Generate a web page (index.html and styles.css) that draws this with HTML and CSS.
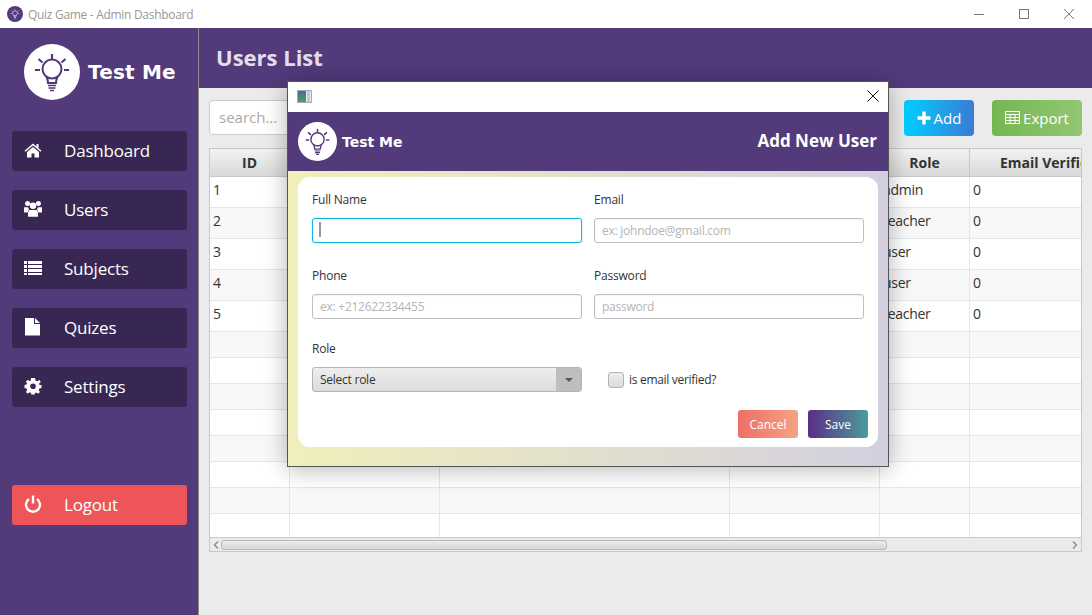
FILE: index.html
```html
<!DOCTYPE html>
<html lang="en">
  <head>
    <meta charset="UTF-8" />
    <title>Quiz Game - Admin Dashboard</title>
    <link rel="stylesheet" href="styles.css">
  </head>
  <body>
    <svg class="defs" width="0" height="0">
      <symbol id="bulb" viewBox="0 0 56 56">
        <g fill="none" stroke="currentColor" stroke-width="2" stroke-linecap="butt">
          <circle cx="28" cy="25" r="9.5"/>
          <path d="M22.500 33 C24 36 24 37 24 39 H32 C32 37 32 36 33.500 33"/>
          <path d="M24 41.500 H32 M24.500 44 H31.500 M26 46.500 H30" stroke-width="1.500"/>
          <path d="M28 10 V15 M14.500 15 L18.500 18.500 M41.500 15 L37.500 18.500 M11 26 H16 M40 26 H45" stroke-width="2.200"/>
        </g>
      </symbol>
    </svg>

    <header class="titlebar">
      <span class="app-icon"><svg width="14" height="14"><use href="#bulb"/></svg></span>
      <span class="app-title">Quiz Game - Admin Dashboard</span>
      <div class="win-controls">
        <svg width="12" height="12" viewBox="0 0 12 12"><path d="M1 6.500 H11" stroke="#777" fill="none"/></svg>
        <svg width="12" height="12" viewBox="0 0 12 12"><rect x="1.500" y="1.500" width="9" height="9" stroke="#777" fill="none"/></svg>
        <svg width="12" height="12" viewBox="0 0 12 12"><path d="M1 1 L11 11 M11 1 L1 11" stroke="#777" fill="none"/></svg>
      </div>
    </header>

    <div class="app">
      <aside class="sidebar">
        <div class="brand">
          <span class="logo logo-big"><svg width="56" height="56"><use href="#bulb"/></svg></span>
          <span class="brand-name">Test Me</span>
        </div>
        <nav class="nav">
          <a class="nav-item">
            <svg class="nav-icon" viewBox="0 0 18 18"><path d="M9 2.500 L12.500 5.500 V3 H14.500 V7.200 L17.500 9.800 L16.600 10.800 L9 4.400 L1.400 10.800 L0.500 9.800 Z M3 11 L9 5.900 L15 11 V16.500 H10.500 V12.500 H7.500 V16.500 H3 Z" fill="#fff"/></svg>
            Dashboard
          </a>
          <a class="nav-item">
            <svg class="nav-icon" viewBox="0 0 20 20"><g fill="#fff"><circle cx="4" cy="4" r="2.800"/><circle cx="16" cy="4" r="2.800"/><circle cx="10" cy="6.500" r="3.600"/><path d="M0 8 H4.500 L5.500 10.500 L4 14 H0 Z M20 8 H15.500 L14.500 10.500 L16 14 H20 Z M6 11 H14 L15.500 13.500 V18.500 H4.500 V13.500 Z"/></g></svg>
            Users
          </a>
          <a class="nav-item">
            <svg class="nav-icon" viewBox="0 0 18 18"><path d="M0 2 H3 V5 H0 Z M4 2 H18 V5 H4 Z M0 6 H3 V9 H0 Z M4 6 H18 V9 H4 Z M0 10 H3 V13 H0 Z M4 10 H18 V13 H4 Z M0 14 H3 V16 H0 Z M4 14 H18 V16 H4 Z" fill="#fff"/></svg>
            Subjects
          </a>
          <a class="nav-item">
            <svg class="nav-icon" viewBox="0 0 18 18"><path d="M1 0 H10 V6 H16 V17.500 H1 Z M11 0 L16 5 H11 Z" fill="#fff"/></svg>
            Quizes
          </a>
          <a class="nav-item">
            <svg class="nav-icon" viewBox="0 0 18 18"><path fill-rule="evenodd" d="M7 1 H11 L11.500 3.400 L13.400 4.200 L15.500 2.900 L16.800 5 L15 6.600 L15.500 8 H17.500 V11 L15.400 11.500 L14.700 13.200 L16 15 L14 16.800 L12.300 15.400 L11 16 L10.700 17.500 H7.300 L7 15.900 L5.500 15.300 L3.900 16.700 L1.900 14.900 L3.200 13.200 L2.600 11.500 L0.500 11 V8 L2.600 7.600 L3.200 6.300 L1.800 4.800 L3.700 2.900 L5.500 4.100 L6.800 3.500 Z M9 6.500 A2.800 2.800 0 1 0 9 12.100 A2.800 2.800 0 1 0 9 6.500 Z" fill="#fff"/></svg>
            Settings
          </a>
          <a class="nav-item logout">
            <svg class="nav-icon" viewBox="0 0 18 18"><path d="M5 4 A7 7 0 1 0 13 4 M9 0.500 V8.500" fill="none" stroke="#fff" stroke-width="2.400"/></svg>
            Logout
          </a>
        </nav>
      </aside>

      <main class="main">
        <div class="page-head"><h1>Users List</h1></div>
        <div class="content">
          <div class="toolbar">
            <input class="search" placeholder="search...">
            <button class="tool-btn add">
              <svg width="14" height="14" viewBox="0 0 14 14"><path d="M5.300 0.500 H8.700 V5.300 H13.500 V8.700 H8.700 V13.500 H5.300 V8.700 H0.500 V5.300 H5.300 Z" fill="#fff"/></svg>
              Add
            </button>
            <button class="tool-btn export">
              <svg width="15" height="13" viewBox="0 0 15 13"><path d="M0.500 0.500 H14.500 V12.500 H0.500 Z M0.500 3.500 H14.500 M0.500 6.500 H14.500 M0.500 9.500 H14.500 M5 3.500 V12.500 M10 3.500 V12.500" fill="none" stroke="#fff"/></svg>
              Export
            </button>
          </div>

          <div class="table-box">
            <div class="table-clip">
              <table class="users">
                <colgroup>
                  <col class="c-id"><col class="c-name"><col class="c-email"><col class="c-phone"><col class="c-role"><col class="c-verified">
                </colgroup>
                <thead>
                  <tr><th>ID</th><th>Full Name</th><th>Email</th><th>Phone</th><th>Role</th><th>Email Verified</th></tr>
                </thead>
                <tbody>
                  <tr class="filled"><td>1</td><td></td><td></td><td></td><td>admin</td><td>0</td></tr>
                  <tr class="filled"><td>2</td><td></td><td></td><td></td><td>teacher</td><td>0</td></tr>
                  <tr class="filled"><td>3</td><td></td><td></td><td></td><td>user</td><td>0</td></tr>
                  <tr class="filled"><td>4</td><td></td><td></td><td></td><td>user</td><td>0</td></tr>
                  <tr class="filled"><td>5</td><td></td><td></td><td></td><td>teacher</td><td>0</td></tr>
                  <tr><td></td><td></td><td></td><td></td><td></td><td></td></tr>
                  <tr><td></td><td></td><td></td><td></td><td></td><td></td></tr>
                  <tr><td></td><td></td><td></td><td></td><td></td><td></td></tr>
                  <tr><td></td><td></td><td></td><td></td><td></td><td></td></tr>
                  <tr><td></td><td></td><td></td><td></td><td></td><td></td></tr>
                  <tr><td></td><td></td><td></td><td></td><td></td><td></td></tr>
                  <tr><td></td><td></td><td></td><td></td><td></td><td></td></tr>
                  <tr><td></td><td></td><td></td><td></td><td></td><td></td></tr>
                </tbody>
              </table>
            </div>
            <div class="hscroll">
              <svg width="6" height="8" viewBox="0 0 6 8"><path d="M5 0.500 L1.500 4 L5 7.500" fill="none" stroke="#888" stroke-width="1.300"/></svg>
              <div class="thumb-track"><div class="thumb"></div></div>
              <svg width="6" height="8" viewBox="0 0 6 8"><path d="M1 0.500 L4.500 4 L1 7.500" fill="none" stroke="#888" stroke-width="1.300"/></svg>
            </div>
          </div>
        </div>
      </main>
    </div>

    <section class="dialog">
      <div class="dialog-title">
        <span class="java-icon"><i></i><i></i></span>
        <svg width="12" height="12" viewBox="0 0 12 12"><path d="M0.500 0.500 L11.500 11.500 M11.500 0.500 L0.500 11.500" stroke="#111" fill="none"/></svg>
      </div>
      <div class="dialog-head">
        <div class="brand-small">
          <span class="logo logo-small"><svg width="39" height="39"><use href="#bulb"/></svg></span>
          <span class="brand-name small">Test Me</span>
        </div>
        <h2>Add New User</h2>
      </div>
      <div class="dialog-body">
        <form class="card">
          <div class="form-grid">
            <div class="field">
              <span class="field-label">Full Name</span>
              <input class="text-in focused">
              <span class="caret"></span>
            </div>
            <div class="field">
              <span class="field-label">Email</span>
              <input class="text-in" placeholder="ex: johndoe@gmail.com">
            </div>
            <div class="field">
              <span class="field-label">Phone</span>
              <input class="text-in" placeholder="ex: +212622334455">
            </div>
            <div class="field">
              <span class="field-label">Password</span>
              <input class="text-in" placeholder="password">
            </div>
            <div class="field">
              <span class="field-label">Role</span>
              <div class="select"><span>Select role</span><b><i></i></b></div>
            </div>
            <div class="verified"><span class="check"></span><span>is email verified?</span></div>
          </div>
          <div class="actions">
            <button type="button" class="act cancel">Cancel</button>
            <button type="button" class="act save">Save</button>
          </div>
        </form>
      </div>
    </section>
  </body>
</html>
```

FILE: styles.css
```css
* {
  box-sizing: border-box;
}

html,
body {
  margin: 0;
  height: 615px;
  overflow: hidden;
}

body {
  font-family: "Open Sans", "Liberation Sans", sans-serif;
  color: #333;
  background: #ebebeb;
}

.defs {
  position: absolute;
}

/* window chrome */
.titlebar {
  height: 28px;
  background: #fff;
  display: flex;
  align-items: center;
  padding-left: 7px;
}

.app-icon {
  width: 16px;
  height: 16px;
  border-radius: 50%;
  background: #533a7b;
  color: #fff;
  display: flex;
  align-items: center;
  justify-content: center;
}

.app-title {
  margin-left: 5px;
  font-size: 12px;
  letter-spacing: -0.3px;
  color: #999;
}

.win-controls {
  margin-left: auto;
  display: flex;
  gap: 33px;
  padding-right: 17px;
}

.app {
  display: flex;
  height: 587px;
}

/* sidebar */
.sidebar {
  width: 199px;
  flex: none;
  background: #533a7b;
  border-right: 1px solid #8a8a8a;
  padding: 16px 11px 0 12px;
}

.brand {
  display: flex;
  align-items: center;
  gap: 8px;
  padding-left: 12px;
}

.logo {
  border-radius: 50%;
  background: #fff;
  color: #533a7b;
  display: block;
  flex: none;
}

.logo svg {
  display: block;
}

.logo-big {
  width: 56px;
  height: 56px;
}

.logo-small {
  width: 39px;
  height: 39px;
}

.brand-name {
  font-family: "DejaVu Sans", sans-serif;
  font-weight: bold;
  font-size: 20px;
  letter-spacing: 0.2px;
  color: #fff;
}

.brand-name.small {
  font-size: 14px;
  letter-spacing: 0;
}

.nav {
  margin-top: 31px;
  display: flex;
  flex-direction: column;
  gap: 19px;
}

.nav-item {
  height: 40px;
  border-radius: 3px;
  background: #372752;
  color: #fff;
  font-size: 17px;
  letter-spacing: -0.2px;
  display: flex;
  align-items: center;
  padding: 0 0 2px 12px;
}

.nav-icon {
  width: 18px;
  height: 18px;
  margin-right: 22px;
  flex: none;
}

.logout {
  margin-top: 59px;
  background: #ee5558;
}

/* main */
.main {
  flex: 1;
  min-width: 0;
}

.page-head {
  height: 60px;
  background: #533a7b;
  display: flex;
  align-items: center;
  padding: 0 0 2px 17px;
}

.page-head h1 {
  margin: 0;
  font-size: 22px;
  font-weight: bold;
  color: #e3e0ec;
}

.content {
  padding: 12px 10px 0;
}

.toolbar {
  display: flex;
  height: 36px;
  gap: 18px;
}

.search {
  width: 200px;
  height: 35px;
  margin-right: auto;
  border: 1px solid #ccc;
  border-radius: 4px;
  background: #fff;
  padding: 0 9px 2px;
  font: 15px "Open Sans", sans-serif;
}

.search::placeholder {
  color: #aaa;
  opacity: 1;
}

.tool-btn {
  height: 36px;
  border: 0;
  border-radius: 4px;
  color: #fff;
  font: 15px "Open Sans", sans-serif;
  display: flex;
  align-items: center;
  justify-content: center;
  gap: 3px;
  padding: 0 0 1px;
}

.add {
  width: 70px;
  background: linear-gradient(to right, #00cfff, #3a7bd5);
}

.export {
  width: 90px;
  background: linear-gradient(to right, #74b751, #93c672);
}

/* table */
.table-box {
  margin-top: 12px;
  width: 873px;
  height: 404px;
  border: 1px solid #c8c8c8;
  background: #fff;
  display: flex;
  flex-direction: column;
}

.table-clip {
  flex: 1;
  overflow: hidden;
}

.users {
  border-collapse: separate;
  border-spacing: 0;
  table-layout: fixed;
  width: 918px;
  font-size: 14px;
}

.c-id { width: 80px; }
.c-name { width: 150px; }
.c-email { width: 290px; }
.c-phone { width: 150px; }
.c-role { width: 90px; }
.c-verified { width: 158px; }

.users th {
  height: 28px;
  padding: 0;
  font-weight: bold;
  text-align: center;
  white-space: nowrap;
  color: #333;
  background: linear-gradient(#f2f2f2, #d9d9d9);
  border-right: 1px solid #c8c8c8;
  border-bottom: 1px solid #c8c8c8;
}

.users td {
  height: 26px;
  padding: 0 3px 6px;
  color: #333;
  letter-spacing: -0.3px;
  white-space: nowrap;
  overflow: hidden;
  border-right: 1px solid #e6e6e6;
  border-bottom: 1px solid #e6e6e6;
}

.users .filled td {
  height: 31px;
}

.users tbody tr:nth-child(even) td {
  background: #f8f8f8;
}

.hscroll {
  height: 14px;
  flex: none;
  background: #ebebeb;
  border-top: 1px solid #c8c8c8;
  display: flex;
  align-items: center;
  padding: 0 3px;
  gap: 2px;
}

.thumb-track {
  flex: 1;
  height: 10px;
}

.thumb {
  width: 666px;
  height: 100%;
  border: 1px solid #b8b8b8;
  border-radius: 3px;
  background: linear-gradient(#ececec, #d6d6d6);
}

/* dialog */
.dialog {
  position: absolute;
  left: 287px;
  top: 81px;
  width: 602px;
  height: 386px;
  border: 1px solid #555;
  background: #fff;
  box-shadow: 0 2px 22px rgba(0, 0, 0, 0.3);
  display: flex;
  flex-direction: column;
}

.dialog-title {
  height: 30px;
  flex: none;
  display: flex;
  align-items: center;
  justify-content: space-between;
  padding: 0 9px 2px;
}

.java-icon {
  width: 15px;
  height: 13px;
  border: 1px solid #aaa;
  display: flex;
  background: #e8eef0;
}

.java-icon i:first-child {
  width: 8px;
  background: linear-gradient(#3e6f9c, #4f9a72);
}

.java-icon i:last-child {
  width: 3px;
  margin-left: 1px;
  background: #b9cdd0;
}

.dialog-head {
  height: 59px;
  flex: none;
  background: #533a7b;
  display: flex;
  align-items: center;
  justify-content: space-between;
  padding: 0 11px 0 10px;
}

.brand-small {
  display: flex;
  align-items: center;
  gap: 5px;
}

.dialog-head h2 {
  margin: 0 0 2px;
  font-size: 17px;
  font-weight: bold;
  color: #fff;
}

.dialog-body {
  flex: 1;
  min-height: 0;
  padding: 6px 10px 18px;
  background: linear-gradient(to right, #f1efba, #d3cfe0);
}

.card {
  height: 270px;
  background: #fff;
  border-radius: 12px;
  padding: 14px 10px 9px 14px;
  display: flex;
  flex-direction: column;
}

.form-grid {
  display: grid;
  grid-template-columns: 270px 270px;
  grid-template-rows: 76px 73px 52px;
  column-gap: 12px;
}

.field {
  position: relative;
  font-size: 12px;
  line-height: 17px;
  color: #333;
}

.field-label {
  display: block;
  height: 17px;
  letter-spacing: -0.2px;
}

.text-in {
  display: block;
  width: 100%;
  height: 25px;
  margin-top: 10px;
  border: 1px solid #c0c0c0;
  border-radius: 3px;
  padding: 0 7px;
  font: 12px "Open Sans", sans-serif;
  letter-spacing: -0.25px;
  box-shadow: inset 0 1px 2px rgba(0, 0, 0, 0.06);
  outline: 0;
}

.text-in::placeholder {
  color: #b5b5b5;
  opacity: 1;
}

.text-in.focused {
  border: 1.5px solid #0db4e0;
  box-shadow: 0 0 2px rgba(13, 180, 224, 0.4);
}

.caret {
  position: absolute;
  left: 7px;
  top: 31px;
  width: 2px;
  height: 15px;
  background: #999;
}

.select {
  height: 25px;
  margin-top: 10px;
  border: 1px solid #b4b4b4;
  border-radius: 3px;
  background: linear-gradient(#eeeeee, #dcdcdc);
  display: flex;
  align-items: center;
  justify-content: space-between;
  padding-left: 7px;
  letter-spacing: -0.25px;
}

.select b {
  width: 25px;
  height: 100%;
  background: #bebebe;
  display: flex;
  align-items: center;
  justify-content: center;
  border-radius: 0 2px 2px 0;
}

.select i {
  width: 0;
  height: 0;
  border-left: 4px solid transparent;
  border-right: 4px solid transparent;
  border-top: 4px solid #555;
}

.verified {
  display: flex;
  align-items: center;
  gap: 5px;
  height: 25px;
  margin-top: 27px;
  padding-left: 14px;
  font-size: 12px;
  letter-spacing: -0.3px;
  color: #333;
}

.check {
  width: 16px;
  height: 16px;
  border: 1px solid #b4b4b4;
  border-radius: 3px;
  background: linear-gradient(#eeeeee, #dcdcdc);
}

.actions {
  margin-top: auto;
  display: flex;
  justify-content: flex-end;
  gap: 10px;
}

.act {
  width: 60px;
  height: 28px;
  border: 0;
  border-radius: 3px;
  color: #fff;
  font: 12px "Open Sans", sans-serif;
  padding: 0;
}

.cancel {
  background: linear-gradient(to right, #ee6f67, #f4a384);
}

.save {
  background: linear-gradient(to right, #5c2d86, #4a9c9c);
}
```
